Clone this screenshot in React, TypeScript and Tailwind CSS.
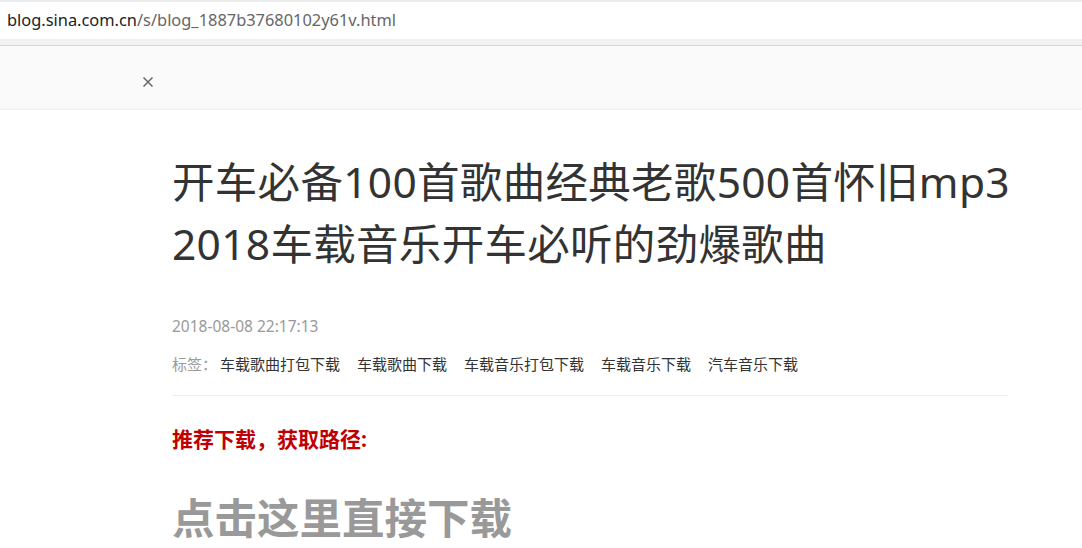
import React from "react";

const cjk = '"Noto Sans", "Noto Sans CJK SC", sans-serif';

export default function App() {
  const tags = ["车载歌曲打包下载", "车载歌曲下载", "车载音乐打包下载", "车载音乐下载", "汽车音乐下载"];
  return (
    <div className="w-[1082px] h-[548px] overflow-hidden bg-white" style={{ fontFamily: cjk }}>
      <div className="h-[39px] border-t-2 border-[#ececec] bg-white flex items-center pl-[7px]">
        <span className="text-[16.4px] text-[#202124]">blog.sina.com.cn</span>
        <span className="text-[16.4px] text-[#666]">/s/blog_1887b37680102y61v.html</span>
      </div>
      <div className="h-[7px] bg-[#f1f1f1] border-b border-[#d6d6d6]" />
      <div className="h-[64px] bg-[#fafafa] border-b border-[#efefef] flex items-center pl-[143px] pt-[9px]">
        <svg width="10" height="10" viewBox="0 0 10 10">
          <path d="M0.5 0.5 L9.5 9.5 M9.5 0.5 L0.5 9.5" stroke="#666" strokeWidth="1.5" fill="none" />
        </svg>
      </div>
      <div className="pl-[172px] w-[1082px]">
        <h1 className="mt-[41px] text-[42.5px] leading-[62px] text-[#333] font-normal tracking-[0.3px]">
          <span className="block whitespace-nowrap">开车必备100首歌曲经典老歌500首怀旧mp3</span>
          <span className="block whitespace-nowrap">2018车载音乐开车必听的劲爆歌曲</span>
        </h1>
        <div className="mt-[41px] text-[15.5px] leading-[20px] text-[#999]">2018-08-08 22:17:13</div>
        <div className="mt-[18px] flex items-center text-[15px] leading-[20px]">
          <span className="text-[#999] mr-[3px]">标签：</span>
          <div className="flex gap-[17px]">
            {tags.map((t) => (
              <span key={t} className="text-[#333]">{t}</span>
            ))}
          </div>
        </div>
        <div className="mt-[21px] w-[836px] border-t border-[#eeeeee]" />
        <div className="mt-[31px] text-[21px] leading-[24px] font-bold text-[#c00000]">推荐下载，获取路径:</div>
        <div className="mt-[39px] text-[42.5px] leading-[56px] font-bold text-[#999]">点击这里直接下载</div>
      </div>
    </div>
  );
}
